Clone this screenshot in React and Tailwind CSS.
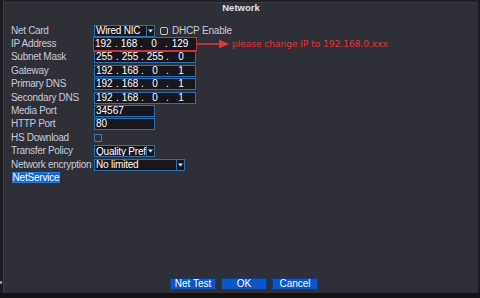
import React from "react";

const font = { fontFamily: '"Liberation Sans", Arial, sans-serif' };

function Label({ children }) {
  return (
    <div className="w-[83px] shrink-0 text-[10px] leading-none tracking-[-0.3px] text-[#c9cadb] whitespace-nowrap">
      {children}
    </div>
  );
}

function Arrow() {
  return (
    <div className="w-[8px] h-full flex items-center justify-center border-l border-[#3a6fae]">
      <svg width="5" height="4" viewBox="0 0 5 4">
        <path d="M0 0.5 L5 0.5 L2.5 3.5 Z" fill="#e8e8f0" />
      </svg>
    </div>
  );
}

function Select({ w, value }) {
  return (
    <div className={`${w} h-[12px] border border-[#2f6fb0] bg-[#16161c] flex items-center overflow-hidden`}>
      <div className="flex-1 min-w-0 pl-[1px] text-[10px] leading-[11px] tracking-[-0.2px] text-white whitespace-nowrap overflow-hidden">{value}</div>
      <Arrow />
    </div>
  );
}

function IpBox({ parts, red }) {
  return (
    <div
      className={
        red
          ? "w-[104px] -ml-[1px] h-[14px] border-[1.5px] border-[#c8303a] bg-[#16161c] flex items-center text-[10px] leading-none text-white"
          : "w-[102px] h-[12px] border border-[#2f6fb0] bg-[#16161c] flex items-center text-[10px] leading-none text-white"
      }
    >
      <div className="w-[19px] pl-[1px] text-left">{parts[0]}</div>
      <div className="w-[7px] text-center">.</div>
      <div className="w-[18px] text-center">{parts[1]}</div>
      <div className="w-[7px] text-center">.</div>
      <div className="w-[18px] text-center">{parts[2]}</div>
      <div className="w-[7px] text-center">.</div>
      <div className="w-[20px] text-center">{parts[3]}</div>
    </div>
  );
}

function TextBox({ value }) {
  return (
    <div className="w-[61px] h-[12px] border border-[#2f6fb0] bg-[#16161c] flex items-center pl-[1px] text-[10px] leading-none text-white">
      {value}
    </div>
  );
}

function Row({ label, children }) {
  return (
    <div className="h-[13.4px] flex items-center">
      <Label>{label}</Label>
      {children}
    </div>
  );
}

function Btn({ children, w }) {
  return (
    <div className={`${w} h-[12px] bg-[#0c56c6] border border-[#0a3c8e] rounded-[1px] flex items-center justify-center text-[10px] leading-none text-white`}>
      {children}
    </div>
  );
}

export default function App() {
  return (
    <div className="relative w-[480px] h-[298px] bg-[#141414] flex flex-col overflow-hidden" style={font}>
      <div className="absolute left-0 top-[281px] w-[2px] h-[3px] bg-[#8c8cc0]" />
      <div className="h-[293px] flex">
        <div className="w-[3px] bg-[#1c1c20]" />
        <div className="w-[475px] border-l border-[#40404a] bg-[#2f2f37] flex flex-col">
          <div className="h-[3px] bg-[#222226] border-b border-[#3a3a40]" />
          <div className="h-[10px] flex items-center justify-center text-[9.5px] font-bold leading-none text-[#dfe2f2]">
            Network
          </div>
          <div className="pl-[7px] pt-[11px] flex flex-col">
            <Row label="Net Card">
              <Select w="w-[61px]" value="Wired NIC" />
              <div className="ml-[5px] w-[8px] h-[8px] rounded-[2px] border border-[#c8c8d4]" />
              <div className="ml-[4px] text-[10px] leading-none tracking-[-0.2px] text-[#c9cadb]">DHCP Enable</div>
            </Row>
            <Row label="IP Address">
              <IpBox parts={["192", "168", "0", "129"]} red />
              <svg width="34" height="10" viewBox="0 0 34 10">
                <line x1="0" y1="5" x2="24" y2="5" stroke="#e03838" strokeWidth="1.5" />
                <path d="M22 0.5 L32 5 L22 9.5 Z" fill="#e03838" />
              </svg>
              <div
                className="ml-[1px] text-[9px] leading-none text-[#e3323c] whitespace-nowrap"
                style={{ fontFamily: '"DejaVu Sans", Verdana, sans-serif' }}
              >
                please change IP to 192.168.0.xxx
              </div>
            </Row>
            <Row label="Subnet Mask">
              <IpBox parts={["255", "255", "255", "0"]} />
            </Row>
            <Row label="Gateway">
              <IpBox parts={["192", "168", "0", "1"]} />
            </Row>
            <Row label="Primary DNS">
              <IpBox parts={["192", "168", "0", "1"]} />
            </Row>
            <Row label="Secondary DNS">
              <IpBox parts={["192", "168", "0", "1"]} />
            </Row>
            <Row label="Media Port">
              <TextBox value="34567" />
            </Row>
            <Row label="HTTP Port">
              <TextBox value="80" />
            </Row>
            <Row label="HS Download">
              <div className="w-[8px] h-[8px] rounded-[1px] border border-[#3a7cc0]" />
            </Row>
            <Row label="Transfer Policy">
              <Select w="w-[61px]" value="Quality Prefe" />
            </Row>
            <Row label="Network encryption">
              <Select w="w-[91px]" value="No limited" />
            </Row>
            <div className="h-[13.4px] flex items-center pl-[1px]">
              <div className="w-[48px] h-[11px] bg-[#1464d2] border border-[#2a7ae0] flex items-center justify-center text-[10px] leading-none tracking-[-0.2px] text-white">
                NetService
              </div>
            </div>
          </div>
          <div className="flex-1" />
          <div className="flex gap-[5px] pl-[166px] pb-[3px]">
            <Btn w="w-[46px]">Net Test</Btn>
            <Btn w="w-[46px]">OK</Btn>
            <Btn w="w-[46px]">Cancel</Btn>
          </div>
        </div>
        <div className="w-[2px] bg-[#1c1c20]" />
      </div>
      <div className="flex-1 bg-[#141414]" />
    </div>
  );
}
